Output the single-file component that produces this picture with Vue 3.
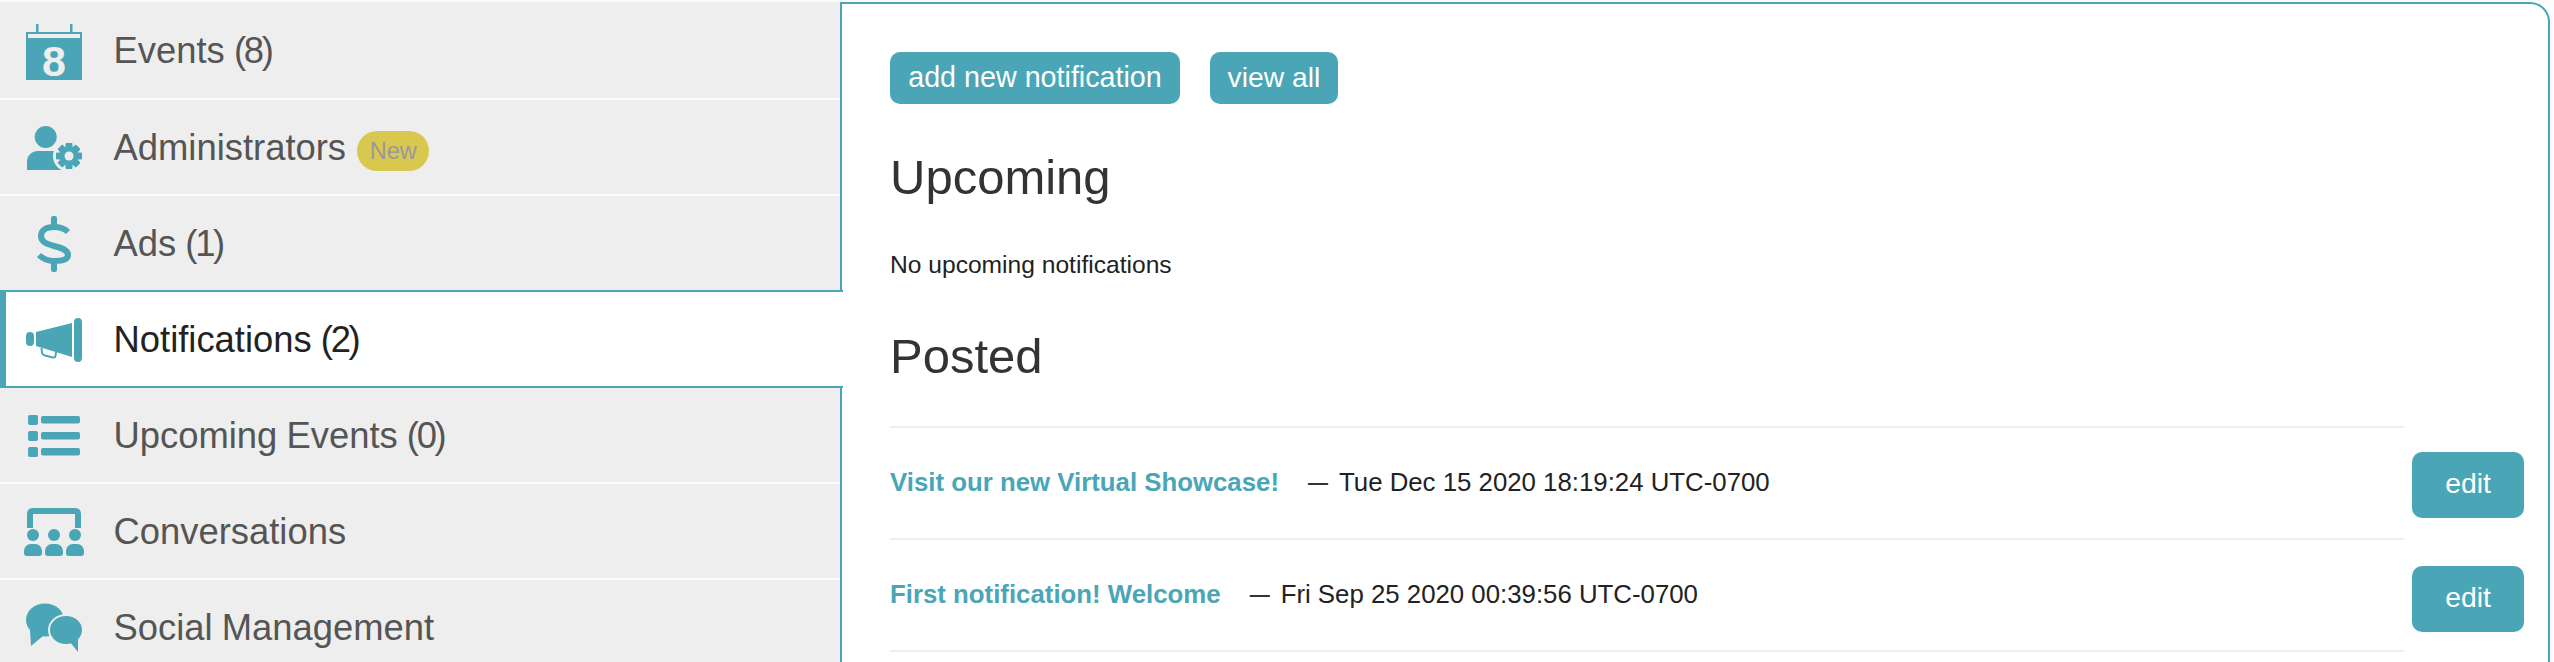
<template>
  <div class="page">
    <nav class="sidebar">
      <a v-for="item in navItems" :key="item.name" class="nav-item" :class="{ active: item.active, first: item.first }">
        <svg class="nav-icon" viewBox="0 0 60 60" width="60" height="60">
          <g v-if="item.icon === 'events'">
            <rect x="12" y="4" width="2.5" height="9" />
            <rect x="46" y="4" width="2.5" height="9" />
            <rect x="2" y="12" width="56" height="48" />
            <rect x="4" y="14" width="52" height="4" class="cut" />
            <text x="30" y="56" text-anchor="middle" class="cal-num">8</text>
          </g>
          <g v-else-if="item.icon === 'admin'">
            <circle cx="21.7" cy="20" r="11" />
            <path d="M3 53 V45 C3 38 8 34 14 34 H30 C36 34 40 38 40 45 V53 Z" />
            <circle cx="45" cy="39" r="16" class="cut" />
            <circle cx="45" cy="39" r="9.5" />
            <rect v-for="a in gearTeeth" :key="a" x="41.5" y="26" width="7" height="26" rx="1" :transform="`rotate(${a} 45 39)`" />
            <circle cx="45" cy="39" r="4.5" class="cut" />
          </g>
          <g v-else-if="item.icon === 'ads'">
            <rect x="27" y="3" width="6" height="10" rx="2" />
            <rect x="27" y="49" width="6" height="10" rx="2" />
            <path class="line" stroke-width="6" d="M44 19 C40 15 35 14 30 14 C21 14 17 18 17 23 C17 29 23 31 30 33 C38 35 44 37 44 42 C44 46 39 48 30 48 C24 48 19 46 15 42" />
          </g>
          <g v-else-if="item.icon === 'megaphone'">
            <rect x="2" y="23" width="8" height="14" rx="4" />
            <path d="M12 23 L48 14 V48 L12 37 Z" />
            <rect x="50" y="9" width="8" height="44" rx="4" />
            <path class="line" stroke-width="2" d="M17.5 39 L18 44 Q18.5 45.5 21 46.5 L29 48.5 Q31 49 31.5 47 L32 43" />
          </g>
          <g v-else-if="item.icon === 'list'">
            <template v-for="y in [10, 26, 42]" :key="y">
              <rect x="4" :y="y" width="10" height="10" rx="2" />
              <rect x="17" :y="y + 1" width="39" height="7.5" rx="2" />
            </template>
          </g>
          <g v-else-if="item.icon === 'conversations'">
            <path class="line" stroke-width="6" d="M6 27 V13 Q6 10 9 10 H51 Q54 10 54 13 V27" />
            <template v-for="x in [9, 30, 51]" :key="x">
              <circle :cx="x" cy="34" r="6" />
              <path :d="`M${x - 9} 52 V51 C${x - 9} 46 ${x - 6} 43 ${x - 2} 43 H${x + 2} C${x + 6} 43 ${x + 9} 46 ${x + 9} 51 V52 Q${x + 9} 55 ${x + 6} 55 H${x - 6} Q${x - 9} 55 ${x - 9} 52 Z`" />
            </template>
          </g>
          <g v-else>
            <ellipse cx="21" cy="23" rx="19" ry="16.5" />
            <path d="M6 33 L7 49 L19 39 Z" />
            <ellipse cx="42" cy="33" rx="18" ry="16" class="cut" />
            <ellipse cx="42" cy="33" rx="16" ry="14" />
            <path d="M46 45 L54 55 L54 41 Z" />
          </g>
        </svg>
        <span class="nav-label">{{ item.name }}{{ ' ' }}<span v-if="item.count" class="nav-count">{{ item.count }}</span></span>
        <span v-if="item.badge" class="badge">{{ item.badge }}</span>
      </a>
    </nav>

    <main class="panel">
      <div class="actions">
        <button class="btn btn-add">add new notification</button>
        <button class="btn btn-view">view all</button>
      </div>

      <h2 class="upcoming">Upcoming</h2>
      <p class="empty">No upcoming notifications</p>
      <h2 class="posted-title">Posted</h2>

      <div class="posted">
        <div class="posted-list">
          <div v-for="note in notifications" :key="note.title" class="posted-row">
            <a class="posted-link">{{ note.title }}</a>
            <span class="posted-dash">—</span>
            <span class="posted-date">{{ note.date }}</span>
          </div>
        </div>
        <div class="posted-edit">
          <button v-for="note in notifications" :key="note.title" class="btn btn-edit">edit</button>
        </div>
      </div>
    </main>
  </div>
</template>

<script setup>
const gearTeeth = [0, 45, 90, 135]

const navItems = [
  { name: 'Events', count: '(8)', icon: 'events', first: true },
  { name: 'Administrators', icon: 'admin', badge: 'New' },
  { name: 'Ads', count: '(1)', icon: 'ads' },
  { name: 'Notifications', count: '(2)', icon: 'megaphone', active: true },
  { name: 'Upcoming Events', count: '(0)', icon: 'list' },
  { name: 'Conversations', icon: 'conversations' },
  { name: 'Social Management', icon: 'social' }
]

const notifications = [
  { title: 'Visit our new Virtual Showcase!', date: 'Tue Dec 15 2020 18:19:24 UTC-0700' },
  { title: 'First notification! Welcome', date: 'Fri Sep 25 2020 00:39:56 UTC-0700' }
]
</script>

<style scoped>
.page {
  display: flex;
  align-items: flex-start;
  height: 660px;
  padding-top: 2px;
  overflow: hidden;
  background: #fbfbfb;
  font-family: "Liberation Sans", Arial, sans-serif;
  color: #222;
}

.sidebar {
  width: 840px;
  flex-shrink: 0;
  display: flex;
  flex-direction: column;
}

.nav-item {
  display: flex;
  align-items: center;
  height: 94px;
  flex-shrink: 0;
  margin-bottom: 2px;
  padding-left: 24px;
  background: #eee;
  color: #555;
  font-size: 36.4px;
  word-spacing: -1px;
  --cut: #eee;
}

.nav-item.first {
  height: 96px;
}

.nav-item.active {
  position: relative;
  z-index: 1;
  box-sizing: border-box;
  width: 843px;
  height: 98px;
  margin-top: -2px;
  margin-bottom: 0;
  padding-left: 18px;
  background: #fff;
  border-top: 2px solid #4aa6b6;
  border-bottom: 2px solid #4aa6b6;
  border-left: 6px solid #4aa6b6;
  color: #222;
  --cut: #fff;
}

.nav-icon {
  flex-shrink: 0;
  margin-right: 29.5px;
  overflow: visible;
  fill: #4aa6b6;
}

.nav-icon .cut {
  fill: var(--cut);
}

.nav-icon .line {
  fill: none;
  stroke: #4aa6b6;
}

.cal-num {
  fill: var(--cut);
  font-size: 43px;
  font-weight: 700;
}

.nav-label {
  padding-top: 1px;
  white-space: pre;
}

.nav-count {
  letter-spacing: -2.3px;
}

.badge {
  display: flex;
  align-items: center;
  justify-content: center;
  width: 72px;
  height: 40px;
  margin: 8px 0 0 2px;
  padding-top: 1px;
  box-sizing: border-box;
  border-radius: 20px;
  background: #d9c850;
  color: #999;
  font-size: 23.5px;
}

.panel {
  box-sizing: border-box;
  width: 1710px;
  height: 700px;
  flex-shrink: 0;
  padding: 48px 0 0 48px;
  background: #fff;
  border: 2px solid #4aa6b6;
  border-bottom: none;
  border-top-right-radius: 20px;
}

.actions {
  display: flex;
  gap: 30px;
}

.btn {
  height: 52px;
  padding: 0 0 2px;
  border: none;
  border-radius: 10px;
  background: #4aa6b6;
  color: #fff;
  font-family: inherit;
  font-size: 28.3px;
}

.btn-add {
  width: 290px;
  font-size: 28.7px;
}

.btn-view {
  width: 128px;
}

h2 {
  margin: 0;
  color: #333;
  font-size: 49px;
  font-weight: 400;
  line-height: 54px;
}

.upcoming {
  margin-top: 46px;
}

.empty {
  margin: 44px 0 0;
  font-size: 24.6px;
  line-height: 34px;
}

.posted-title {
  margin-top: 47px;
}

.posted {
  display: flex;
  align-items: flex-start;
  margin-top: 43px;
}

.posted-list {
  width: 1514px;
  flex-shrink: 0;
  border-bottom: 2px solid #eee;
}

.posted-row {
  box-sizing: border-box;
  display: flex;
  align-items: center;
  height: 112px;
  padding-bottom: 2px;
  border-top: 2px solid #eee;
  font-size: 25.8px;
}

.posted-link {
  margin-right: 29px;
  color: #4aa6b6;
  font-weight: 700;
}

.posted-dash {
  margin-right: 11px;
  font-size: 20px;
  font-weight: 700;
  color: #333;
}

.posted-edit {
  display: flex;
  flex-direction: column;
  gap: 48px;
  margin-left: 8px;
  padding-top: 26px;
}

.btn-edit {
  width: 112px;
  height: 66px;
  padding-bottom: 4px;
}
</style>

<style>
html,
body {
  overflow: hidden;
  background: #fbfbfb;
}
</style>
